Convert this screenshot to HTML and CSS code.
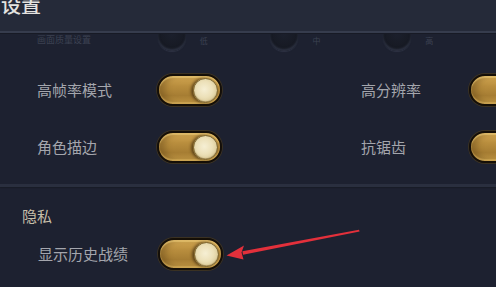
FILE: index.html
```html
<!DOCTYPE html>
<html lang="zh-CN">
<head>
<meta charset="utf-8">
<title>设置</title>
<link rel="stylesheet" href="styles.css">
</head>
<body>
<div class="page">
  <header class="header">
    <h1 class="title">设置</h1>
  </header>
  <main class="content">
    <div class="option-row">
      <span class="opt-label">画面质量设置</span>
      <span class="opt-item"><span class="radio"></span><span class="opt-text">低</span></span>
      <span class="opt-item"><span class="radio"></span><span class="opt-text">中</span></span>
      <span class="opt-item"><span class="radio"></span><span class="opt-text">高</span></span>
    </div>
    <section class="group">
      <div class="grid">
        <div class="setting"><span class="label">高帧率模式</span><span class="toggle"><span class="knob"></span></span></div>
        <div class="setting right"><span class="label">高分辨率</span><span class="toggle"><span class="knob"></span></span></div>
        <div class="setting"><span class="label">角色描边</span><span class="toggle"><span class="knob"></span></span></div>
        <div class="setting right"><span class="label">抗锯齿</span><span class="toggle"><span class="knob"></span></span></div>
      </div>
    </section>
    <div class="divider"></div>
    <section class="group privacy">
      <h2 class="group-title">隐私</h2>
      <div class="setting single"><span class="label">显示历史战绩</span><span class="toggle"><span class="knob"></span></span></div>
    </section>
    <svg class="arrow" width="496" height="287" viewBox="0 0 496 287">
      <polygon points="359,229.8 359.6,231.6 243,254.8 242.4,251.2" fill="#e3303b"/>
      <polygon points="226.5,255.5 244,245.5 241.5,252.5 243.5,259.5" fill="#e3303b"/>
    </svg>
  </main>
</div>
</body>
</html>
```
FILE: styles.css
```css
html, body {
  margin: 0;
  padding: 0;
}
body {
  width: 496px;
  height: 287px;
  overflow: hidden;
  background: #1d2130;
  font-family: "Noto Sans CJK SC", "Noto Sans", sans-serif;
}
.page {
  width: 496px;
  height: 287px;
  display: flex;
  flex-direction: column;
  overflow: hidden;
}
.header {
  height: 31px;
  flex: none;
  background: #252a39;
  border-bottom: 2px solid #363c4d;
  box-shadow: 0 1px 0 #171a25;
  overflow: hidden;
  position: relative;
  z-index: 2;
}
.title {
  margin: -5px 0 0 1px;
  font-size: 20px;
  line-height: 20px;
  font-weight: 500;
  color: #e4e3e0;
}
.content {
  flex: 1;
  position: relative;
  overflow: hidden;
  background: #1d2130;
}
.option-row {
  margin-top: -10px;
  height: 28px;
  display: flex;
  align-items: center;
  padding-left: 37px;
}
.opt-label {
  width: 123px;
  font-size: 9px;
  color: #3c4252;
  line-height: 12px;
  margin-top: 6px;
}
.opt-item {
  display: flex;
  align-items: center;
  width: 115px;
}
.radio {
  width: 28px;
  height: 28px;
  border-radius: 50%;
  background: radial-gradient(circle at 50% 40%, #1b1f2c 0%, #161922 70%, #252a3a 100%);
  box-shadow: 0 1px 1px #2e3344, inset 0 -2px 2px #2c3141;
}
.opt-text {
  margin-left: 14px;
  margin-top: 6px;
  font-size: 8px;
  color: #3c4252;
}
.group {
  padding-left: 37px;
}
.grid {
  margin-top: 23px;
  display: grid;
  grid-template-columns: 324px 1fr;
  row-gap: 25px;
}
.setting {
  display: flex;
  align-items: center;
  height: 32px;
}
.label {
  width: 120px;
  flex: none;
  font-size: 15px;
  line-height: 20px;
  color: #a4a6ad;
}
.right .label {
  width: 108px;
}
.toggle {
  flex: none;
  position: relative;
  width: 65px;
  height: 32px;
  box-sizing: border-box;
  border-radius: 16px;
  border: 2px solid #150f07;
  background: linear-gradient(to bottom, #d7ab55 0%, #b98e3e 35%, #a67d33 70%, #c49a47 100%);
  box-shadow: 0 0 0 1px #3a3122, inset 0 2px 1px rgba(255, 225, 140, 0.45), inset 0 -2px 1px rgba(240, 200, 110, 0.4), inset 6px 0 6px rgba(80, 55, 15, 0.35);
  display: flex;
  align-items: center;
  justify-content: flex-end;
  padding-right: 2px;
}
.knob {
  width: 25px;
  height: 25px;
  box-sizing: border-box;
  border-radius: 50%;
  border: 1px solid #7a6533;
  background: radial-gradient(circle at 45% 45%, #f6efd4 0%, #ece0b8 45%, #d3c18b 90%);
  box-shadow: -2px 0 3px rgba(40, 25, 5, 0.6), inset 0 -1px 1px rgba(150, 120, 60, 0.6);
}
.divider {
  margin-top: 21px;
  height: 3px;
  background: #2a2f3f;
  box-shadow: 0 1px 1px #191c27;
}
.privacy {
  padding-left: 22px;
}
.group-title {
  margin: 19px 0 0 0;
  font-size: 15px;
  line-height: 20px;
  font-weight: 400;
  color: #c6bea8;
}
.single {
  margin-top: 12px;
  padding-left: 16px;
}
.arrow {
  position: absolute;
  left: 0;
  top: -33px;
  pointer-events: none;
}
```
